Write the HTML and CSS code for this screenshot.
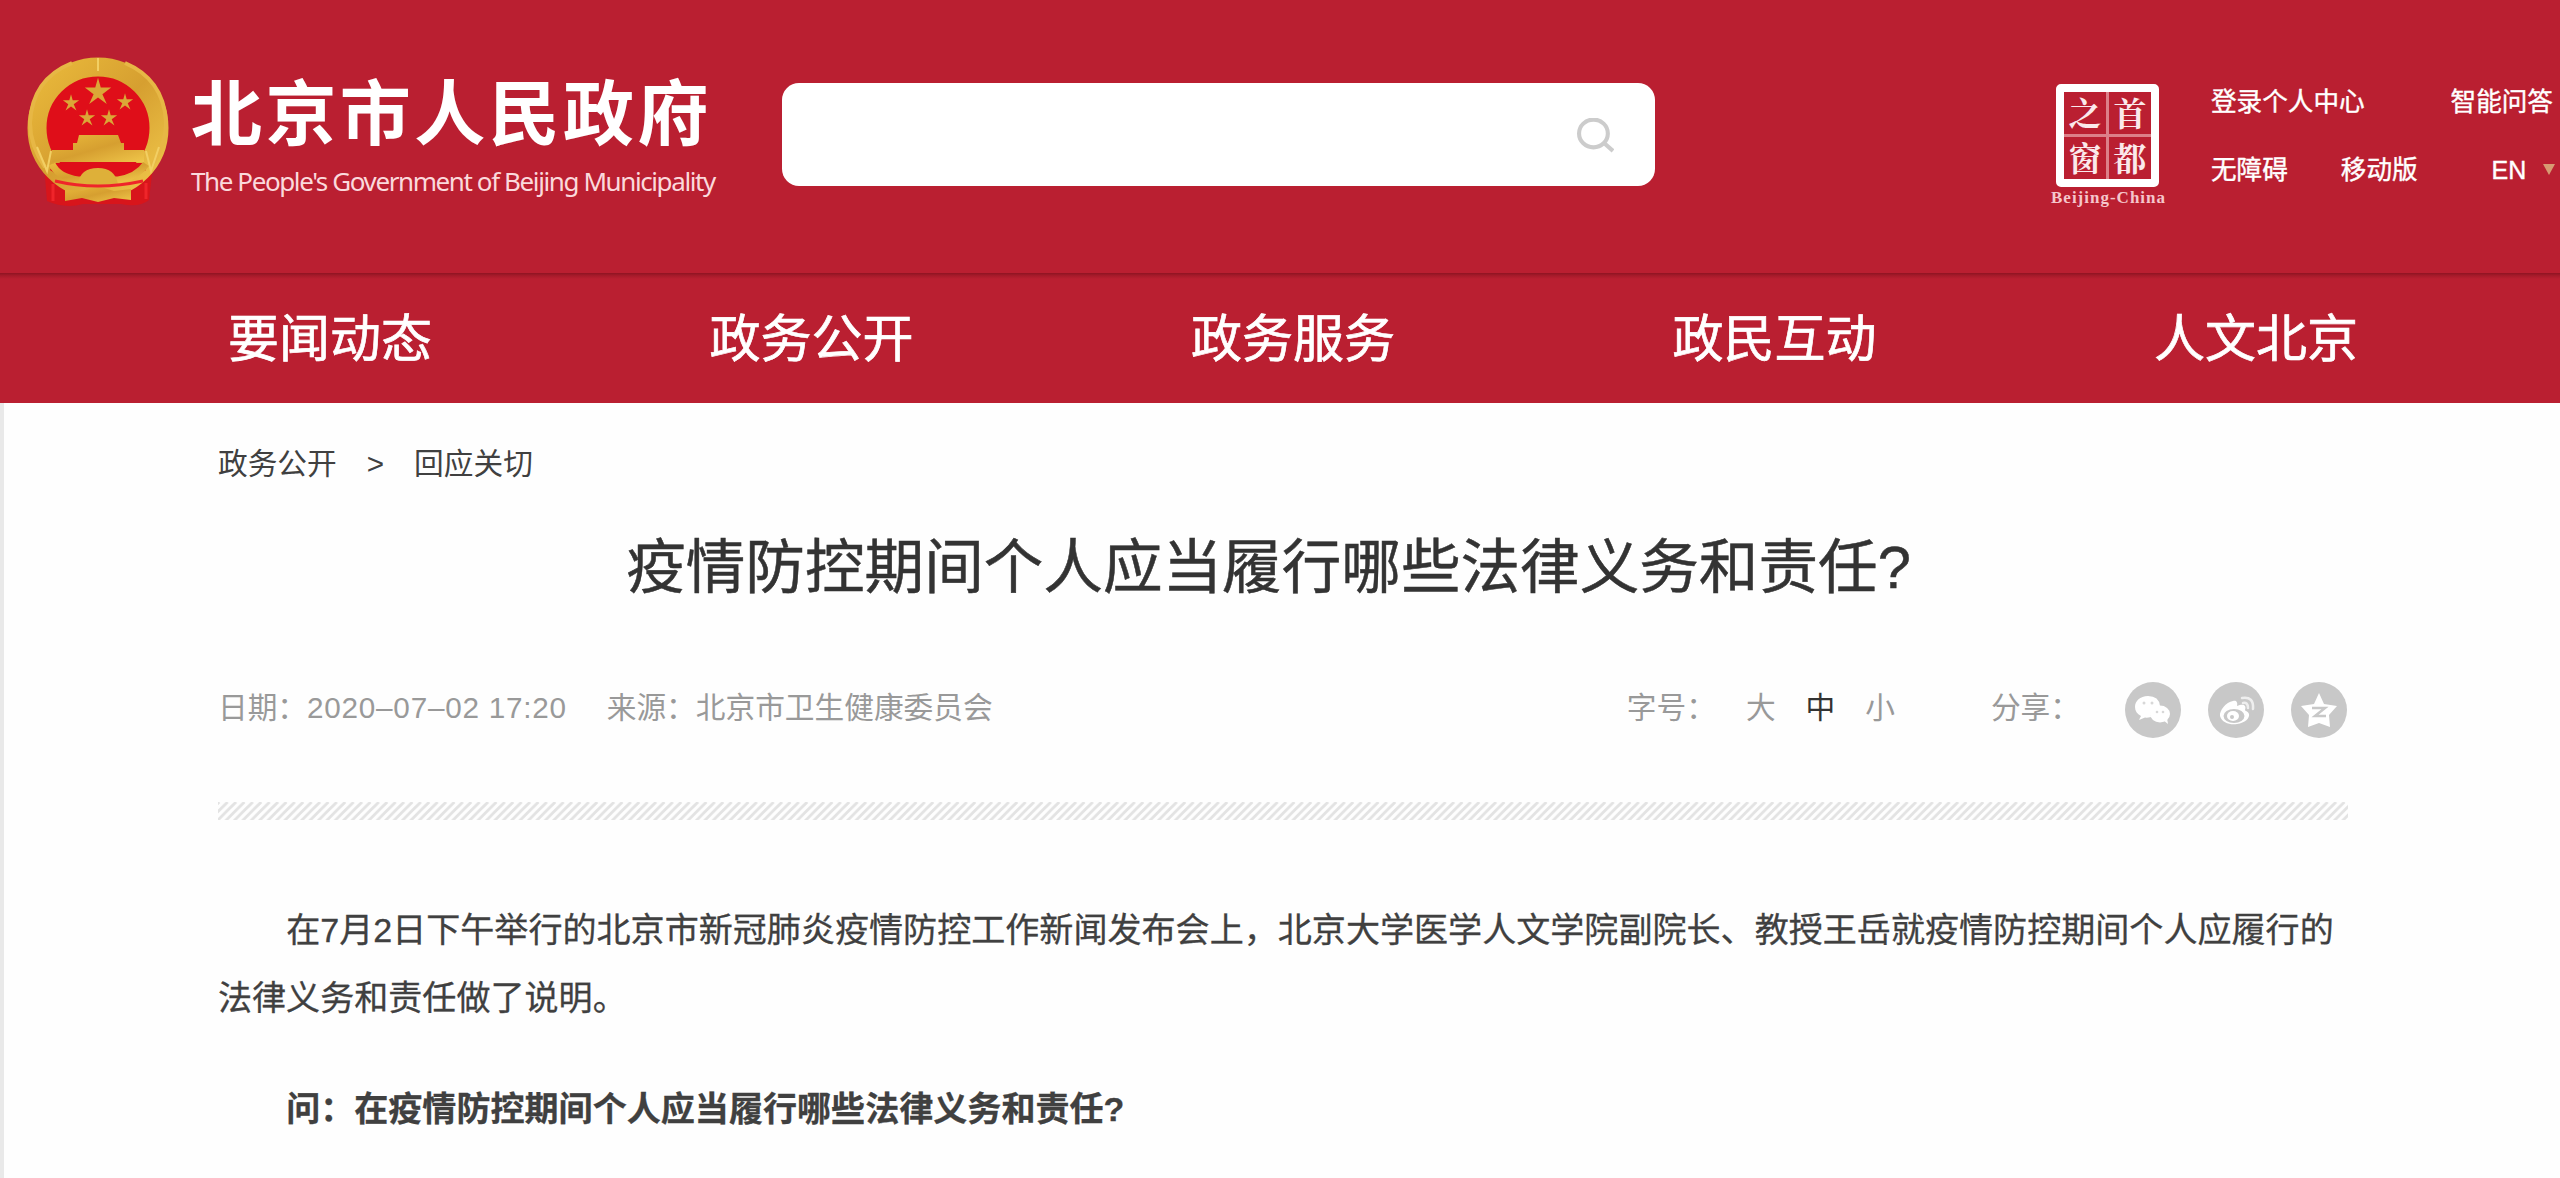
FILE: index.html
```html
<!DOCTYPE html>
<html lang="zh-CN">
<head>
    <meta charset="UTF-8">
    <title>疫情防控期间个人应当履行哪些法律义务和责任?</title>
    <link rel="stylesheet" href="styles.css">
</head>
<body>
    <header class="header">
        <div class="logo">
            <svg class="emblem" viewBox="0 0 144 152">
                <defs>
                    <linearGradient id="gold" x1="0" y1="0" x2="1" y2="1">
                        <stop offset="0" stop-color="#e9b93b"/>
                        <stop offset="0.5" stop-color="#d69f30"/>
                        <stop offset="1" stop-color="#efc64a"/>
                    </linearGradient>
                    <path id="star" d="M0-13L2.500-4 12-4 4 2 8 11 0 5-8 11-4 2-12-4-2.500-4Z"/>
                </defs>
                <path d="M17 108L20 144Q38 152 56 147L94 147Q112 151 122 143L126 108Z" fill="#d8151b"/>
                <circle cx="71" cy="71" r="61" fill="#df0e19"/>
                <circle cx="71" cy="71" r="61" fill="none" stroke="url(#gold)" stroke-width="19"/>
                <path d="M18 110Q3 88 3 66Q5 22 45 6M124 110Q140 84 139 64Q136 22 98 6" fill="none" stroke="#e7b745" stroke-width="4"/>
                <path d="M71 1V14M10 90L20 114 24 94M132 90L124 114 119 94" fill="none" stroke="#f2cf63" stroke-width="2"/>
                <path d="M27 106H116L119 113Q96 128 71 126Q43 127 23 113Z" fill="#df0e19"/>
                <g fill="#dba737">
                    <use href="#star" transform="translate(71 35) scale(1.1)"/>
                    <use href="#star" transform="translate(44 46) scale(.68)"/>
                    <use href="#star" transform="translate(98 45) scale(.68)"/>
                    <use href="#star" transform="translate(60 61) scale(.68)"/>
                    <use href="#star" transform="translate(82 61) scale(.68)"/>
                </g>
                <path d="M52 78H91L94 86H97V93H117V105H25V93H46V86H50Z" fill="url(#gold)"/>
                <path d="M25 107Q31 120 51 123H91Q110 120 119 107" fill="none" stroke="url(#gold)" stroke-width="7"/>
                <path d="M51 127Q53 111 71 111Q88 111 91 127Z" fill="#deb039"/>
                <path d="M38 133L55 134 71 129 87 134 104 132V143L87 141 71 145 55 141 38 144Z" fill="url(#gold)"/>
                <path d="M28 124Q70 134 116 124M26 127V144M119 126V142" fill="none" stroke="#ef252a" stroke-width="3"/>
            </svg>
            <div class="logo-text">
                <div class="logo-cn">北京市人民政府</div>
                <div class="logo-en">The People's Government of Beijing Municipality</div>
            </div>
        </div>
        <div class="search">
            <svg class="search-icon" viewBox="0 0 36 34">
                <ellipse cx="16" cy="15" rx="14" ry="13.500" fill="none" stroke="#ccc" stroke-width="4"/>
                <path d="M26 24L35 32" stroke="#ccc" stroke-width="4"/>
            </svg>
        </div>
        <div class="capital">
            <div class="seal"><span>之</span><span>首</span><span>窗</span><span>都</span></div>
            <div class="seal-name">Beijing-China</div>
        </div>
        <div class="links">
            <div class="links-row"><a>登录个人中心</a><a class="ask">智能问答</a></div>
            <div class="links-row"><a>无障碍</a><a class="mobile">移动版</a><a class="en">EN</a><i class="arrow"></i></div>
        </div>
    </header>
    <nav class="nav">
        <a>要闻动态</a>
        <a>政务公开</a>
        <a>政务服务</a>
        <a>政民互动</a>
        <a>人文北京</a>
    </nav>
    <main class="main">
        <div class="crumbs"><a>政务公开</a><span>&gt;</span><a>回应关切</a></div>
        <h1>疫情防控期间个人应当履行哪些法律义务和责任?</h1>
        <div class="info">
            <span class="date">日期：<span class="num">2020–07–02 17:20</span></span>
            <span class="source">来源：北京市卫生健康委员会</span>
            <span class="size-label">字号：</span>
            <div class="sizes"><a>大</a><a class="active">中</a><a>小</a></div>
            <span class="share-label">分享：</span>
            <div class="share">
                <svg viewBox="0 0 56 56">
                    <circle cx="28" cy="28" r="28" fill="#c8c8c8"/>
                    <path d="M23 14C15 14 10 19 10 25C10 29 12 32 16 34L14 38 20 35.500Q22 36 26 35Q24 26 35 24Q34 14 23 14Z" fill="#fff"/>
                    <ellipse cx="35" cy="32" rx="10" ry="8.500" fill="#fff"/>
                    <path d="M38 38L43 42 42 36Z" fill="#fff"/>
                    <g fill="#d8d8d8"><circle cx="19" cy="21" r="1.500"/><circle cx="27" cy="21" r="1.500"/><circle cx="32" cy="30" r="1.300"/><circle cx="38" cy="30" r="1.300"/></g>
                </svg>
                <svg viewBox="0 0 56 56">
                    <circle cx="28" cy="28" r="28" fill="#c8c8c8"/>
                    <path d="M25 19C18 20 11 29 12 34C14 41 22 43 29 42C37 41 42 36 41 32C40 29 37 29 37 28C39 22 34 22 29 24C30 20 28 18 25 19Z" fill="#fff"/>
                    <ellipse cx="26" cy="34" rx="10.500" ry="7" fill="#c8c8c8"/>
                    <ellipse cx="25" cy="34" rx="6" ry="5" fill="#fff"/>
                    <circle cx="24" cy="35" r="2" fill="#c8c8c8"/>
                    <path d="M34 16Q46 14 45 27M35 21Q40 20 40 26" fill="none" stroke="#eee" stroke-width="2.500" stroke-linecap="round"/>
                </svg>
                <svg viewBox="0 0 56 56">
                    <circle cx="28" cy="28" r="28" fill="#c8c8c8"/>
                    <path d="M28 11L33 22 46 24 38 33 39 45 28 41 17 45 18 33 10 24 23 22Z" fill="#fff"/>
                    <path d="M21 26H34L24 34H35" fill="none" stroke="#c8c8c8" stroke-width="2.500"/>
                </svg>
            </div>
        </div>
        <svg class="stripe" width="2130" height="18">
            <defs>
                <pattern id="hatch" width="8.400" height="18" patternUnits="userSpaceOnUse">
                    <path d="M-17.800 19L1.200 0M-9.400 19L9.600 0M-1 19L18 0M7.400 19L26.400 0" stroke="#e3e3e3" stroke-width="2.800"/>
                </pattern>
            </defs>
            <rect width="2130" height="18" fill="url(#hatch)"/>
        </svg>
        <article class="content">
            <p>在7月2日下午举行的北京市新冠肺炎疫情防控工作新闻发布会上，北京大学医学人文学院副院长、教授王岳就疫情防控期间个人应履行的法律义务和责任做了说明。</p>
            <p><strong>问：在疫情防控期间个人应当履行哪些法律义务和责任?</strong></p>
        </article>
    </main>
</body>
</html>
```

FILE: styles.css
```css
* {
    box-sizing: border-box;
}
body {
    margin: 0;
    height: 1178px;
    overflow: hidden;
    background: #fefefe;
    color: #404040;
    font-family: "Liberation Sans", "Noto Sans CJK SC", sans-serif;
}
.header {
    display: flex;
    align-items: flex-start;
    height: 273px;
    background: #ba1f31;
    color: #fff;
    overflow: hidden;
    white-space: nowrap;
}
.logo {
    display: flex;
    width: 782px;
    padding: 57px 0 0 27px;
}
.emblem {
    width: 144px;
    height: 152px;
}
.logo-text {
    margin: 12px 0 0 20px;
}
.logo-cn {
    font-size: 71px;
    font-weight: 700;
    line-height: 92px;
    letter-spacing: 3.4px;
}
.logo-en {
    margin-top: 2px;
    font-family: "Noto Sans", sans-serif;
    font-size: 26px;
    line-height: 36px;
    letter-spacing: -1.4px;
    color: #fbd9dc;
}
.search {
    display: flex;
    justify-content: flex-end;
    width: 873px;
    height: 103px;
    margin-top: 83px;
    padding: 35px 41px 0 0;
    border-radius: 17px;
    background: #fff;
}
.search-icon {
    width: 37px;
    height: 35px;
}
.capital {
    width: 116px;
    margin: 84px 0 0 396px;
}
.seal {
    display: grid;
    grid-template-columns: 1fr 1fr;
    gap: 3px;
    width: 103px;
    height: 103px;
    margin-left: 5px;
    border: 8px solid #fff;
    border-radius: 5px;
    background: #dc8089;
}
.seal span {
    height: 42px;
    background: #ba1f31;
    font-family: "Noto Serif CJK SC", "Noto Sans CJK SC", sans-serif;
    font-size: 33px;
    font-weight: 700;
    line-height: 40px;
    text-align: center;
    color: #fbe9eb;
}
.seal-name {
    font: 700 17px/22px "Liberation Serif", serif;
    letter-spacing: 1px;
    color: #f5c6cb;
}
.links {
    margin: 84px 0 0 44px;
    font-size: 25.6px;
    -webkit-text-stroke: 0.4px #fff;
}
.links-row {
    display: flex;
    height: 68px;
    line-height: 36px;
}
.ask {
    margin-left: 86px;
}
.mobile {
    margin-left: 53px;
}
.en {
    margin-left: 74px;
    font-size: 25px;
}
.arrow {
    width: 0;
    height: 0;
    margin: 12px 0 0 17px;
    border: 6px solid transparent;
    border-top: 11px solid #d79a72;
}
.nav {
    display: flex;
    gap: 277.5px;
    height: 130px;
    padding-left: 228px;
    background: linear-gradient(#8f1422, #a91b2b 3px, #ba1f31 6px);
    color: #fff;
    font-size: 51px;
    line-height: 134px;
    white-space: nowrap;
    -webkit-text-stroke: 0.7px #fff;
}
.main {
    height: 775px;
    padding: 0 213px 0 214px;
    border-left: 4px solid #e9e9e9;
}
.crumbs {
    display: flex;
    gap: 30px;
    padding-top: 39px;
    font-size: 29.7px;
    line-height: 44px;
}
h1 {
    margin: 46px 28px 0 0;
    color: #333;
    font-size: 59.6px;
    font-weight: 400;
    line-height: 72px;
    text-align: center;
    -webkit-text-stroke: 0.5px #333;
}
.info {
    display: flex;
    align-items: center;
    height: 56px;
    margin-top: 78px;
    color: #999;
    font-size: 29.7px;
    line-height: 44px;
    white-space: nowrap;
}
.info > span,
.sizes {
    margin-bottom: 5px;
}
.num {
    letter-spacing: 0.75px;
}
.source {
    margin-left: 40px;
}
.info .size-label {
    margin-left: auto;
}
.sizes {
    display: flex;
    gap: 30px;
    margin-left: 30px;
}
.sizes .active {
    color: #333;
}
.share-label {
    margin-left: 96px;
}
.share {
    display: flex;
    gap: 27px;
    margin-left: 45px;
}
.share svg {
    width: 56px;
    height: 56px;
}
.stripe {
    display: block;
    margin-top: 64px;
}
.content {
    margin-top: 76px;
    font-size: 34.07px;
    line-height: 68px;
    -webkit-text-stroke: 0.3px #404040;
}
.content p {
    margin: 0 0 43px;
    text-indent: 2em;
}
```
